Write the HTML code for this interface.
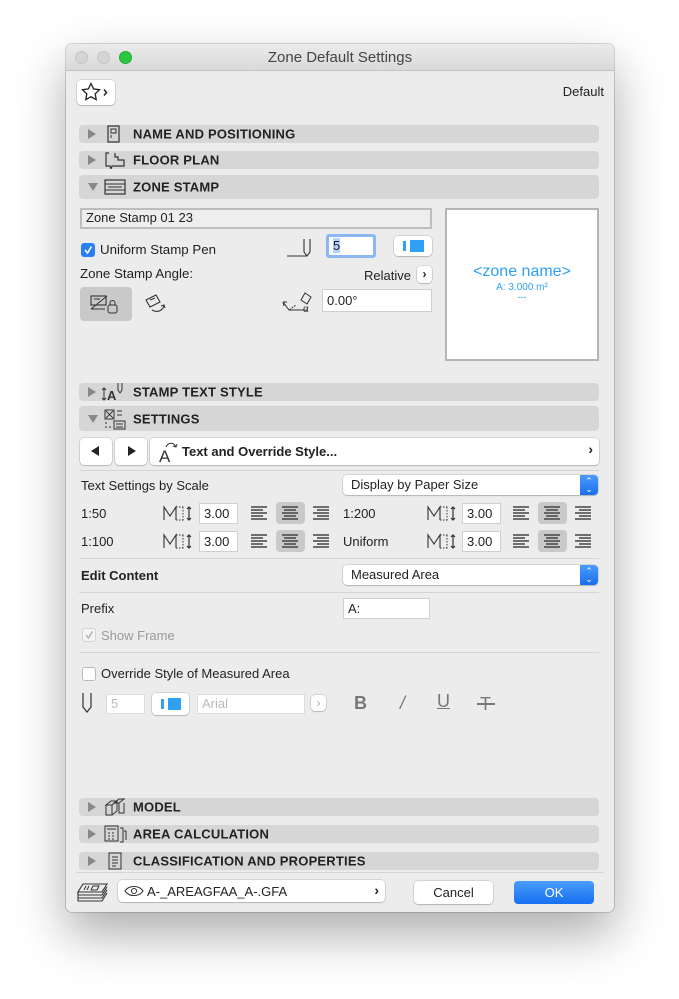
<!DOCTYPE html>
<html><head><meta charset="utf-8"><style>
*{box-sizing:border-box;margin:0;padding:0}
body{width:679px;height:999px;background:#fff;position:relative;font-family:"Liberation Sans",sans-serif;font-size:13px;color:#222;overflow:hidden}
.win{position:absolute;left:66px;top:44px;width:548px;height:868px;background:#ececec;border-radius:6px;box-shadow:0 22px 50px rgba(0,0,0,.33),0 0 0 1px rgba(0,0,0,.15)}
.a{position:absolute}
.title{left:0;top:0;width:548px;height:27px;background:linear-gradient(#ebebeb,#d9d9d9);border-bottom:1px solid #c4c4c4;border-radius:6px 6px 0 0;text-align:center;line-height:27px;font-size:15px;color:#444}
.dot{width:13px;height:13px;border-radius:50%;top:7px}
.bar{left:13px;width:520px;background:#d6d6d6;border-radius:4px;font-weight:bold;font-size:13px;letter-spacing:.2px}
.bar .t{position:absolute;left:54px;top:50%;transform:translateY(-50%)}
.tri{position:absolute;left:9px;top:50%;transform:translateY(-50%);width:0;height:0;border-top:5px solid transparent;border-bottom:5px solid transparent;border-left:8px solid #888}
.tri.d{border-left:5px solid transparent;border-right:5px solid transparent;border-top:8px solid #888;border-bottom:0}
.ic{position:absolute;left:25px;top:50%;transform:translateY(-50%)}
.inp{background:#fff;border:1px solid #cfcfcf;padding-left:4px;line-height:18px}
.btn{background:#fff;border-radius:4px;box-shadow:0 0 0 .5px rgba(0,0,0,.2),0 1px 1px rgba(0,0,0,.15)}
.line{left:13px;width:520px;height:1px;background:#d4d4d4}
.sel{background:#fff;border-radius:4px;box-shadow:0 0 0 .5px rgba(0,0,0,.2),0 1px 1px rgba(0,0,0,.15);height:20px;line-height:20px;padding-left:8px}
.sel .ar{position:absolute;right:0;top:0;width:18px;height:20px;background:linear-gradient(#4b9bfb,#1a6ff0);border-radius:0 4px 4px 0;color:#fff;font-size:9px;line-height:8px;text-align:center;padding-top:2px}
.cb{width:14px;height:14px;border-radius:3px;background:#fff;border:1px solid #bbb}
.hl{background:#c9c9c9;border-radius:4px}
</style></head><body>
<div class="win">
<div class="a title">Zone Default Settings</div>
<div class="a dot" style="left:9px;background:#d5d5d5;border:1px solid #c5c5c5"></div>
<div class="a dot" style="left:31px;background:#d5d5d5;border:1px solid #c5c5c5"></div>
<div class="a dot" style="left:53px;background:#2ac840;border:1px solid #1fa934"></div>

<div class="a btn" style="left:11px;top:36px;width:38px;height:25px">
<svg width="38" height="25"><path d="M14 3.5l2.6 5.4 5.9.8-4.3 4.1 1 5.8-5.2-2.8-5.2 2.8 1-5.8-4.3-4.1 5.9-.8z" fill="none" stroke="#222" stroke-width="1.3"/><path d="M27 9.5l2.5 3-2.5 3" fill="none" stroke="#222" stroke-width="1.5"/></svg></div>
<div class="a" style="right:10px;top:40px;font-size:13px">Default</div>

<div class="a bar" style="top:81px;height:18px"><div class="tri"></div><svg class="ic" width="18" height="18"><rect x="4" y="1" width="11" height="16" fill="none" stroke="#333" stroke-width="1.2"/><rect x="7" y="4" width="5" height="4" fill="none" stroke="#333"/><path d="M7 10v3" stroke="#333"/></svg><span class="t">NAME AND POSITIONING</span></div>
<div class="a bar" style="top:107px;height:18px"><div class="tri"></div><svg class="ic" width="22" height="18"><path d="M5 2H2v13h4l1 3 1-3h12V9h-6V6h-3V2" fill="none" stroke="#333" stroke-width="1.2"/></svg><span class="t">FLOOR PLAN</span></div>
<div class="a bar" style="top:131px;height:24px"><div class="tri d"></div><svg class="ic" width="22" height="18"><rect x="1" y="2" width="20" height="14" fill="none" stroke="#333" stroke-width="1.2"/><path d="M1 6h20M1 12h20M4 9h14" stroke="#333"/></svg><span class="t">ZONE STAMP</span></div>

<div class="a inp" style="left:14px;top:164px;width:352px;height:21px;border:2px solid #bdbdbd;background:#eee;line-height:16px;font-size:13px">Zone Stamp 01 23</div>
<div class="a" style="left:379px;top:164px;width:154px;height:153px;background:#fff;border:2px solid #b5b5b5;text-align:center;color:#2ea0f5">
<div style="margin-top:53px;font-size:16px">&lt;zone name&gt;</div><div style="font-size:10px;margin-top:1px">A: 3.000 m²</div><div style="font-size:9px;line-height:8px">---</div></div>

<div class="a cb" style="left:15px;top:199px;background:#2b7ff5;border-color:#2b7ff5"><svg width="12" height="12" style="position:absolute;left:0;top:0"><path d="M3 6l2.5 3L9.5 2.5" fill="none" stroke="#fff" stroke-width="1.6"/></svg></div>
<div class="a" style="left:34px;top:198px;font-size:13.3px">Uniform Stamp Pen</div>
<svg class="a" style="left:221px;top:191px" width="28" height="24"><path d="M0 21h20l3-4V4M17 4v13l3 4" fill="none" stroke="#333" stroke-width="1.1"/></svg>
<div class="a inp" style="left:260px;top:190px;width:50px;height:24px;border:3px solid #8cb7f3;border-radius:3px;line-height:17px"><span style="background:#b3d4fc">5</span></div>
<div class="a btn" style="left:328px;top:192px;width:38px;height:20px"><div class="a" style="left:9px;top:5px;width:3px;height:10px;background:#2ea0f5"></div><div class="a" style="left:16px;top:4px;width:14px;height:12px;background:#2ea0f5"></div></div>
<div class="a" style="left:14px;top:222px;font-size:13.3px">Zone Stamp Angle:</div>
<div class="a" style="left:298px;top:224px">Relative</div>
<div class="a btn" style="left:351px;top:222px;width:15px;height:17px;font-size:12px;text-align:center;line-height:17px;font-weight:bold">›</div>
<div class="a hl" style="left:14px;top:243px;width:52px;height:34px"><svg width="52" height="34"><rect x="11" y="9" width="15" height="9" fill="none" stroke="#333" stroke-width="1.1"/><path d="M14 12h6M11 22l16-13M11 22h14" stroke="#333" fill="none"/><rect x="28" y="18" width="9" height="8" rx="2" fill="none" stroke="#333"/><path d="M30 18v-2a2.5 2.5 0 0 1 5 0v2" fill="none" stroke="#333"/></svg></div>
<svg class="a" style="left:78px;top:248px" width="28" height="24"><path d="M2 8l10-5 4 7-10 5z M6 8l5-2" fill="none" stroke="#333" stroke-width="1.1"/><path d="M8 18c5 3 10 1 12-4M17 14l3-1 1 3" fill="none" stroke="#333" stroke-width="1.1"/></svg>
<svg class="a" style="left:215px;top:246px" width="36" height="26"><path d="M2 12l6 8h18M2 12l1 4M2 12l4 0M24 3l6 4-4 7-6-4z" fill="none" stroke="#333" stroke-width="1"/><path d="M8 20l7-5" stroke="#333" stroke-dasharray="2 1"/><text x="22" y="22" font-size="10" fill="#333" font-family="Liberation Sans">α</text></svg>
<div class="a inp" style="left:256px;top:245px;width:110px;height:23px;line-height:21px">0.00°</div>

<div class="a bar" style="top:339px;height:18px"><div class="tri"></div><svg class="ic" width="26" height="20" style="left:22px"><path d="M3 6v12M1 8l2-2 2 2M1 16l2 2 2-2" fill="none" stroke="#333"/><text x="6" y="18" font-size="13" fill="#333" font-family="Liberation Sans">A</text><path d="M17 1v7l2 3 2-3V1" fill="none" stroke="#333"/></svg><span class="t">STAMP TEXT STYLE</span></div>
<div class="a bar" style="top:362px;height:25px"><div class="tri d"></div><svg class="ic" width="22" height="22"><rect x="1" y="2" width="9" height="9" fill="none" stroke="#333"/><path d="M2 3l7 7M9 3l-7 7M13 3h5M13 7h5M10 13h11v8H10zM12 16h7M12 19h7M1 15h2M1 19h2M5 19h2" stroke="#333" fill="none"/></svg><span class="t">SETTINGS</span></div>

<div class="a btn" style="left:14px;top:394px;width:32px;height:27px"><div class="a" style="left:11px;top:8px;border-top:5px solid transparent;border-bottom:5px solid transparent;border-right:8px solid #222"></div></div>
<div class="a btn" style="left:49px;top:394px;width:32px;height:27px"><div class="a" style="left:13px;top:8px;border-top:5px solid transparent;border-bottom:5px solid transparent;border-left:8px solid #222"></div></div>
<div class="a btn" style="left:84px;top:394px;width:449px;height:27px"><svg class="a" style="left:7px;top:2px" width="24" height="24"><text x="2" y="22" font-size="17" fill="#333" font-family="Liberation Sans">A</text><path d="M9 7c2-5 8-5 10 0M16 6l3 1 1-3" fill="none" stroke="#333"/></svg><span class="a" style="left:32px;top:6px;font-weight:bold;font-size:13px">Text and Override Style...</span><span class="a" style="right:6px;top:3px;font-weight:bold;font-size:14px">›</span></div>
<div class="a line" style="top:426px"></div>

<div class="a" style="left:15px;top:434px">Text Settings by Scale</div>
<div class="a sel" style="left:277px;top:431px;width:255px">Display by Paper Size<div class="ar">⌃<br>⌄</div></div>

<div class="a" style="left:15px;top:462px">1:50</div>
<div class="a" style="left:15px;top:490px">1:100</div>
<div class="a" style="left:277px;top:462px">1:200</div>
<div class="a" style="left:277px;top:490px">Uniform</div>

<svg class="a" style="left:0;top:455px" width="548" height="60">
<defs>
<g id="m"><path d="M1 17V4l6 9 6-9v13" fill="none" stroke="#333" stroke-width="1.1"/><path d="M13 4h8M13 17h8M20 4v13" fill="none" stroke="#333" stroke-dasharray="1.5 1.5"/><path d="M26 4v13M24 6l2-2 2 2M24 15l2 2 2-2" fill="none" stroke="#333" stroke-width="1.2"/></g>
<g id="al" stroke="#444" stroke-width="1.5"><path d="M0 2h16M0 5h12M0 8h16M0 11h12M0 14h16"/></g>
<g id="ac" stroke="#444" stroke-width="1.5"><path d="M0 2h16M2 5h12M0 8h16M2 11h12M0 14h16"/></g>
<g id="ar" stroke="#444" stroke-width="1.5"><path d="M0 2h16M4 5h12M0 8h16M4 11h12M0 14h16"/></g>
</defs>
<rect x="210" y="3" width="29" height="22" rx="4" fill="#c9c9c9"/><rect x="210" y="31" width="29" height="22" rx="4" fill="#c9c9c9"/>
<rect x="472" y="3" width="29" height="22" rx="4" fill="#c9c9c9"/><rect x="472" y="31" width="29" height="22" rx="4" fill="#c9c9c9"/>
<use href="#m" x="97" y="4"/><use href="#m" x="97" y="32"/><use href="#m" x="361" y="4"/><use href="#m" x="361" y="32"/>
<use href="#al" x="185" y="6"/><use href="#ac" x="216" y="6"/><use href="#ar" x="247" y="6"/>
<use href="#al" x="185" y="34"/><use href="#ac" x="216" y="34"/><use href="#ar" x="247" y="34"/>
<use href="#al" x="447" y="6"/><use href="#ac" x="478" y="6"/><use href="#ar" x="509" y="6"/>
<use href="#al" x="447" y="34"/><use href="#ac" x="478" y="34"/><use href="#ar" x="509" y="34"/>
</svg>
<div class="a inp" style="left:133px;top:459px;width:39px;height:21px;line-height:19px">3.00</div>
<div class="a inp" style="left:133px;top:487px;width:39px;height:21px;line-height:19px">3.00</div>
<div class="a inp" style="left:396px;top:459px;width:39px;height:21px;line-height:19px">3.00</div>
<div class="a inp" style="left:396px;top:487px;width:39px;height:21px;line-height:19px">3.00</div>

<div class="a line" style="top:514px"></div>
<div class="a" style="left:15px;top:524px;font-weight:bold">Edit Content</div>
<div class="a sel" style="left:277px;top:521px;width:255px">Measured Area<div class="ar">⌃<br>⌄</div></div>
<div class="a line" style="top:548px"></div>
<div class="a" style="left:15px;top:557px">Prefix</div>
<div class="a inp" style="left:277px;top:554px;width:87px;height:21px;line-height:19px">A:</div>
<div class="a cb" style="left:16px;top:584px;border-color:#d4d4d4;background:#f4f4f4"><svg width="12" height="12" style="position:absolute;left:0;top:0"><path d="M3 6l2.5 3L9.5 2.5" fill="none" stroke="#aaa" stroke-width="1.3"/></svg></div>
<div class="a" style="left:35px;top:584px;color:#999">Show Frame</div>
<div class="a line" style="top:608px"></div>
<div class="a cb" style="left:16px;top:623px"></div>
<div class="a" style="left:35px;top:622px">Override Style of Measured Area</div>

<svg class="a" style="left:15px;top:648px" width="14" height="22"><path d="M2 1v14l4 5 4-5V1" fill="none" stroke="#333" stroke-width="1.2"/></svg>
<div class="a inp" style="left:40px;top:650px;width:39px;height:20px;color:#bbb;border-color:#ddd">5</div>
<div class="a btn" style="left:86px;top:649px;width:37px;height:22px"><div class="a" style="left:9px;top:6px;width:3px;height:10px;background:#2ea0f5"></div><div class="a" style="left:16px;top:5px;width:13px;height:12px;background:#2ea0f5"></div></div>
<div class="a inp" style="left:131px;top:650px;width:108px;height:20px;color:#bbb;border-color:#ddd">Arial</div>
<div class="a btn" style="left:245px;top:651px;width:15px;height:16px;color:#aaa;text-align:center;line-height:16px;font-size:12px">›</div>
<div class="a" style="left:288px;top:649px;font-weight:bold;font-size:18px;color:#777">B</div>
<div class="a" style="left:334px;top:649px;font-style:italic;font-size:18px;color:#777">/</div>
<div class="a" style="left:371px;top:647px;font-size:18px;color:#777;text-decoration:underline">U</div>
<div class="a" style="left:414px;top:650px;font-size:18px;color:#777">T</div>
<div class="a" style="left:411px;top:659px;width:18px;height:1.5px;background:#777"></div>

<div class="a bar" style="top:754px;height:18px"><div class="tri"></div><svg class="ic" width="22" height="20"><path d="M2 8l5-4h6l-5 4zM2 8v10h6V8M8 18l5-4V4M10 6l5-4h5l-5 4zM15 6v10h5V6" fill="none" stroke="#333"/></svg><span class="t">MODEL</span></div>
<div class="a bar" style="top:781px;height:18px"><div class="tri"></div><svg class="ic" width="24" height="20"><rect x="1" y="2" width="13" height="15" fill="none" stroke="#333"/><path d="M3 5h9M4 9h2M8 9h2M4 12h2M8 12h2M4 15h2M8 15h2M16 4h3v14h-3M20 7h2v9" fill="none" stroke="#333"/></svg><span class="t">AREA CALCULATION</span></div>
<div class="a bar" style="top:808px;height:18px"><div class="tri"></div><svg class="ic" width="18" height="18" style="left:28px"><rect x="2" y="1" width="12" height="16" fill="none" stroke="#333"/><path d="M5 5h6M5 8h6M5 11h6M5 14h4" stroke="#333"/></svg><span class="t">CLASSIFICATION AND PROPERTIES</span></div>
<div class="a line" style="top:828px;left:10px;width:528px"></div>

<svg class="a" style="left:11px;top:838px" width="32" height="22"><path d="M6 2h24l-5 8H1zM1 10v3h24l5-8M1 13v3h24l5-8M1 16v3h24l5-8" fill="none" stroke="#333" stroke-width="1.1"/><path d="M9 4l-2 4M12 4l-2 4M16 4h6l-2 4h-6z" fill="none" stroke="#333"/></svg>
<div class="a btn" style="left:52px;top:836px;width:267px;height:22px"><svg class="a" style="left:6px;top:5px" width="20" height="12"><path d="M1 6c4-6 14-6 18 0c-4 6-14 6-18 0z" fill="none" stroke="#333" stroke-width="1.1"/><circle cx="10" cy="6" r="2.5" fill="none" stroke="#333"/></svg><span class="a" style="left:29px;top:4px">A-_AREAGFAA_A-.GFA</span><span class="a" style="right:6px;top:2px;font-weight:bold;font-size:14px">›</span></div>
<div class="a btn" style="left:348px;top:837px;width:79px;height:23px;text-align:center;line-height:23px">Cancel</div>
<div class="a" style="left:448px;top:837px;width:80px;height:23px;border-radius:4px;background:linear-gradient(#4a9cfb,#1670f0);color:#fff;text-align:center;line-height:23px">OK</div>
</div>
</body></html>
